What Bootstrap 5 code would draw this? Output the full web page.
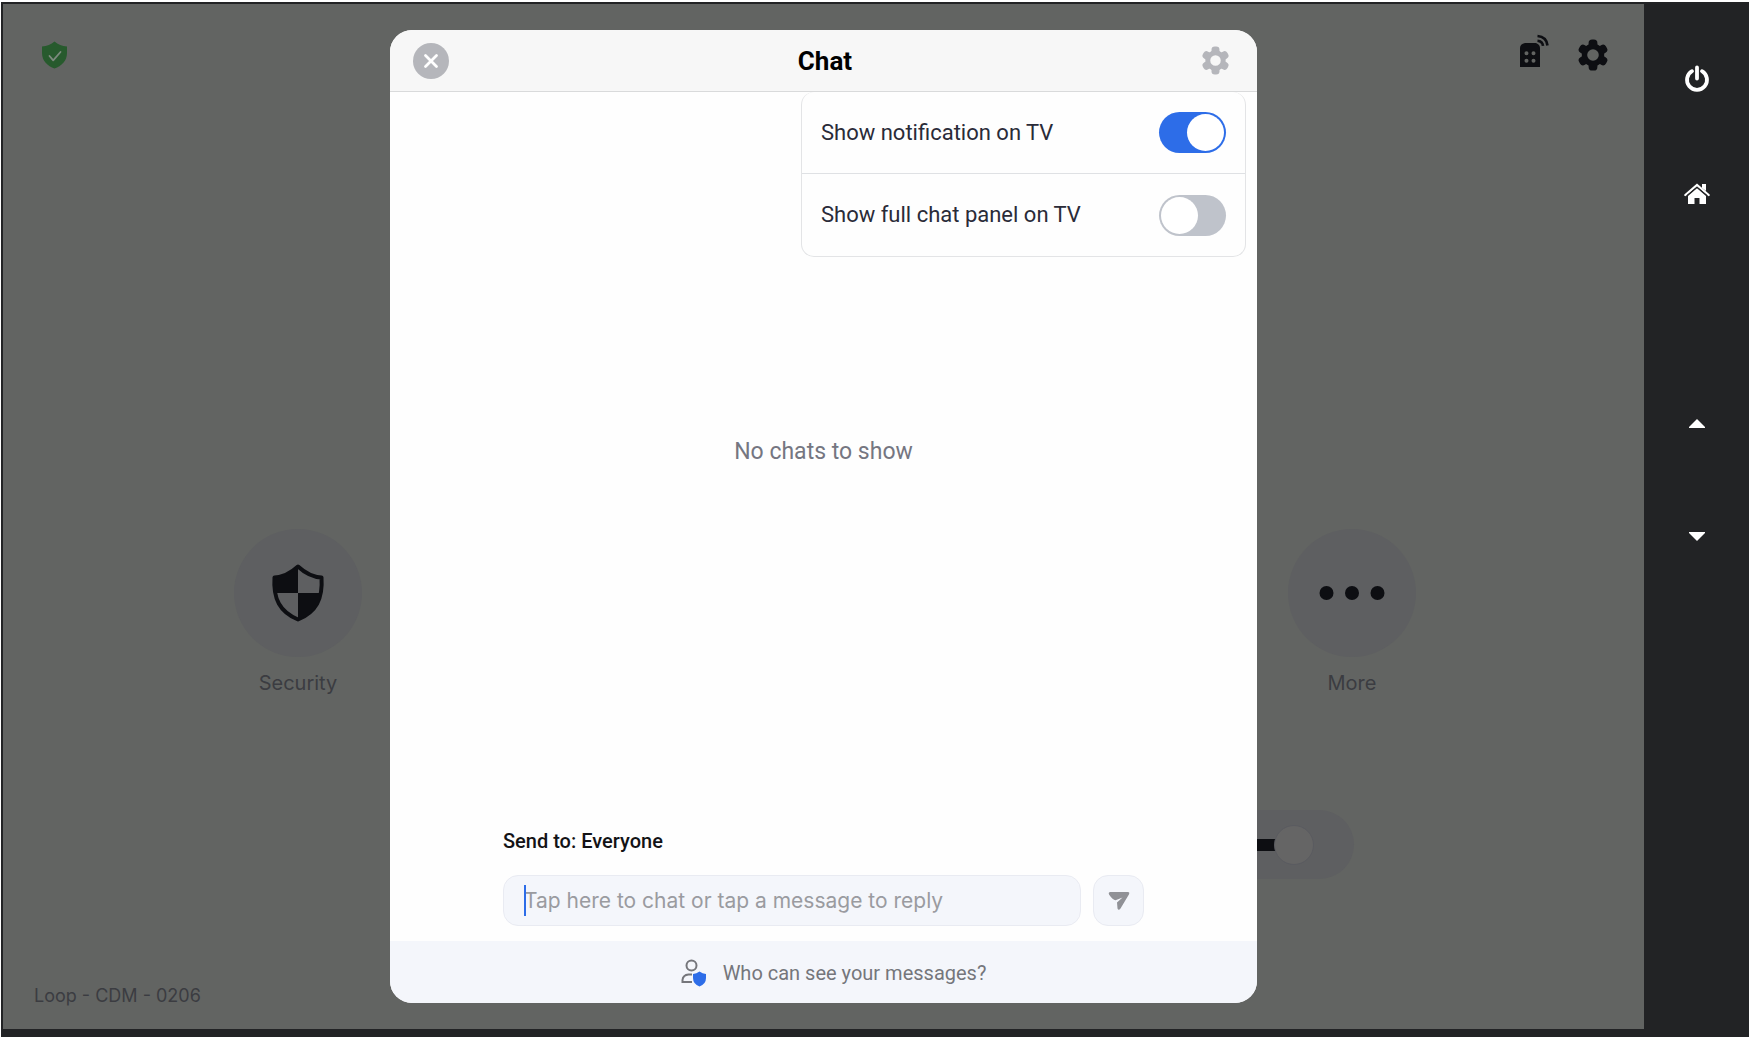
<!DOCTYPE html>
<html lang="en">
<head>
<meta charset="utf-8">
<meta name="viewport" content="width=device-width, initial-scale=1">
<title>Chat</title>
<link rel="stylesheet" href="https://cdn.jsdelivr.net/npm/bootstrap@5.3.0/dist/css/bootstrap.min.css">
<style>
  body { font-family: Roboto, "Liberation Sans", sans-serif; font-size: 20px; line-height: 28px; background: #fff; }
  .device { height: 100vh; padding: 2px 1px 7px; }
  .device-body { background: #222325; padding: 2px 0 8px 2px; }
  .room { background: #626462; font-family: Inter, sans-serif; color: #3b3c41; }
  .room-top { height: 102px; padding: 0 36px 0 38px; }
  .plain { border: 0; background: none; padding: 0; color: inherit; line-height: 0; }
  .dark-ink { color: #0d0e12; }
  .room-tiles { padding: 0 222px 0 225px; margin-top: 423px; font-size: 20px; }
  .tile { border: 0; background: none; padding: 0; color: inherit; width: 140px; }
  .tile-disc { width: 128px; height: 128px; background: #5e5f61; color: #0d0e12; }
  .tile-text { margin-top: 12px; }
  .volume { height: 69px; margin: 113px 290px 0 460px; background: #5e5f61; padding: 0 40px; }
  .volume input { appearance: none; width: 100%; height: 40px; background: none; margin: 0; }
  .volume input::-webkit-slider-runnable-track { height: 12px; background: linear-gradient(#0d0e12, #0d0e12) left / calc(100% - 20px) 100% no-repeat; }
  .volume input::-webkit-slider-thumb { appearance: none; width: 40px; height: 40px; margin-top: -14px; border-radius: 50%; background: #656565; border: 1px solid #5a5b60; }
  .room-name { font-size: 18px; padding: 0 31px 19px; }
  .rail { width: 105px; color: #fff; padding-top: 61px; }
  .rail .plain { width: 40px; height: 26px; display: flex; align-items: center; justify-content: center; }
  .rail .rail-home { margin-top: 90px; }
  .rail .rail-up { margin-top: 203px; }
  .rail .rail-down { margin-top: 87px; }
  .chat-layer { position: absolute; inset: 0; padding: 26px 0; font-family: Roboto, "Liberation Sans", sans-serif; }
  .chat-box { width: 53%; max-width: 867px; background: #fefefe; border-radius: 22px; overflow: hidden; }
  .chat-head { height: 62px; background: #f7f7f7; border-bottom: 1px solid #d9dadb; padding: 0 27px 0 23px; color: #b5b6bb; }
  .chat-title { font-size: 26px; line-height: 32px; font-weight: 700; color: #000; margin: 0; }
  .chat-main { position: relative; }
  .options { position: absolute; top: 0; right: 11px; width: 445px; border: 1px solid #e3e4e6; border-top: 0; border-radius: 13px; background: #fefefe; color: #2a2b38; font-size: 22px; }
  .option { height: 81px; padding: 0 19px; }
  .option + .option { border-top: 1px solid #dfe1e4; height: 83px; }
  .option .form-check-input { width: 67px; height: 41px; margin: 0; border: 0; border-radius: 21px; background: #bfc3cb; position: relative; box-shadow: none; }
  .option .form-check-input::after { content: ""; position: absolute; left: 2px; top: 2px; width: 37px; height: 37px; border-radius: 50%; background: #fff; }
  .option .form-check-input:checked { background: #2d6de8; }
  .option .form-check-input:checked::after { left: 28px; }
  .empty-note { font-size: 23px; color: #757681; padding-top: 346px; }
  .composer { padding: 0 113px 15px; }
  .send-to { color: #131316; margin-bottom: 20px; font-weight: 500; }
  .field, .send { height: 51px; background: #f4f6fb; border: 1px solid #e9ebf2; border-radius: 15px; }
  .field-wrap { position: relative; }
  .field { padding: 0 20px; font-size: 21px; font-family: Inter, sans-serif; }
  .field::placeholder { color: #9a9ba0; }
  .field:focus { background: #f4f6fb; box-shadow: none; border-color: #e9ebf2; }
  .caret { position: absolute; left: 21px; top: 10px; width: 2px; height: 31px; background: #2d6de8; }
  .send { width: 51px; color: #909196; }
  .privacy { height: 62px; background: #f4f6fb; color: #75767b; padding: 2px 0 0 20px; }
  .privacy a { color: inherit; }
</style>
<script src="https://cdn.jsdelivr.net/npm/bootstrap@5.3.0/dist/js/bootstrap.bundle.min.js"></script>
</head>
<body>
<svg class="d-none" aria-hidden="true">
  <symbol id="gear" viewBox="0 0 30 32">
    <circle cx="15" cy="16" r="8.500" fill="none" stroke="currentColor" stroke-width="5.400"/>
    <g fill="currentColor">
      <rect id="tooth" x="10.600" y=".5" width="8.800" height="9" rx="3.600"/>
      <use href="#tooth" transform="rotate(60 15 16)"/>
      <use href="#tooth" transform="rotate(120 15 16)"/>
      <use href="#tooth" transform="rotate(180 15 16)"/>
      <use href="#tooth" transform="rotate(240 15 16)"/>
      <use href="#tooth" transform="rotate(300 15 16)"/>
    </g>
  </symbol>
</svg>
<div class="device">
  <div class="device-body d-flex h-100">
    <div class="room flex-grow-1 position-relative d-flex flex-column">
      <div class="room-top d-flex align-items-center justify-content-between">
        <svg width="27" height="28" viewBox="0 0 27 28" role="img" aria-label="Secured"><path fill="#275a2d" d="M13.500.500C17 3.500 21 5.300 26 5.500V12c0 8-5.500 13-12.500 15.500C6.500 25 1 20 1 12V5.500C6 5.300 10 3.500 13.500.500z"/><path d="M8.500 15l3.700 4.300L19.500 11" fill="none" stroke="#7d8a7e" stroke-width="1.800" stroke-linecap="round" stroke-linejoin="round"/></svg>
        <div class="d-flex align-items-center dark-ink gap-4">
          <button class="plain me-1 pb-2" aria-label="Controller"><svg width="30" height="34" viewBox="0 0 30 34"><path fill="currentColor" fill-rule="evenodd" d="M5 9h11q4 1.500 4 5v19H0V14q0-4 5-5zM6.500 17.300a2 2 0 1 0 0 4 2 2 0 0 0 0-4zm7 0a2 2 0 1 0 0 4 2 2 0 0 0 0-4zm-7 7.500a2 2 0 1 0 0 4 2 2 0 0 0 0-4zm7 0a2 2 0 1 0 0 4 2 2 0 0 0 0-4z"/><path d="M17.500 6.800q5 .5 5.500 5M17.500 2q9 .7 10 9.500" fill="none" stroke="currentColor" stroke-width="2.600"/></svg></button>
          <button class="plain" aria-label="Settings"><svg width="30" height="32"><use href="#gear"/></svg></button>
        </div>
      </div>
      <div class="room-tiles d-flex justify-content-between">
        <button class="tile d-flex flex-column align-items-center">
          <span class="tile-disc rounded-circle d-flex align-items-center justify-content-center"><svg width="54" height="60" viewBox="0 0 54 60"><path d="M27 3.500C20 10 12 14 3.500 14.500 2 36 9 49 27 56.500 45 49 52 36 50.500 14.500 42 14 34 10 27 3.500z" fill="none" stroke="currentColor" stroke-width="4" stroke-linejoin="round"/><path fill="currentColor" d="M27 3.500V30H3.500V14.500C12 14 20 10 27 3.500zM27 30h23C49 43 42 50 27 56.500z"/></svg></span>
          <span class="tile-text">Security</span>
        </button>
        <button class="tile d-flex flex-column align-items-center">
          <span class="tile-disc rounded-circle d-flex align-items-center justify-content-center"><svg width="66" height="16" viewBox="0 0 66 16" fill="currentColor"><circle cx="7.500" cy="8" r="7"/><circle cx="33" cy="8" r="7"/><circle cx="58.500" cy="8" r="7"/></svg></span>
          <span class="tile-text">More</span>
        </button>
      </div>
      <div class="volume rounded-pill d-flex align-items-center"><input type="range" value="100" aria-label="Volume"></div>
      <div class="room-name mt-auto">Loop - CDM - 0206</div>

      <div class="chat-layer d-flex justify-content-center">
        <section class="chat-box d-flex flex-column" role="dialog" aria-labelledby="chatTitle">
          <header class="chat-head d-flex align-items-center justify-content-between">
            <button class="plain" aria-label="Close"><svg width="36" height="36" viewBox="0 0 36 36"><circle cx="18" cy="18" r="18" fill="currentColor"/><path d="M12.500 12.500l11 11m0-11l-11 11" stroke="#fff" stroke-width="2.800" stroke-linecap="round"/></svg></button>
            <h1 class="chat-title" id="chatTitle">Chat</h1>
            <button class="plain" aria-label="Chat settings"><svg width="29" height="29"><use href="#gear"/></svg></button>
          </header>
          <div class="chat-main flex-grow-1 text-center">
            <div class="options">
              <div class="option form-switch d-flex align-items-center justify-content-between">
                <label for="optNotify">Show notification on TV</label>
                <input class="form-check-input" type="checkbox" role="switch" id="optNotify" checked>
              </div>
              <div class="option form-switch d-flex align-items-center justify-content-between">
                <label for="optPanel">Show full chat panel on TV</label>
                <input class="form-check-input" type="checkbox" role="switch" id="optPanel">
              </div>
            </div>
            <p class="empty-note mb-0">No chats to show</p>
          </div>
          <form class="composer">
            <label class="send-to d-block" for="message">Send to: Everyone</label>
            <div class="d-flex gap-2">
              <div class="field-wrap flex-grow-1 me-1"><input class="field form-control" id="message" type="text" placeholder="Tap here to chat or tap a message to reply"><span class="caret"></span></div>
              <button class="send d-flex align-items-center justify-content-center p-0" type="button" aria-label="Send"><svg width="22" height="20" viewBox="0 0 22 20"><path fill="currentColor" d="M1.800 1h18.200q1.800.200 1.200 2L12.500 17.500Q10.500 20 9.500 17.500L9 11.500 14.500 6.500 7.500 9.200Q5 9.300 1 3.500 0 1.500 1.800 1z"/></svg></button>
            </div>
          </form>
          <footer class="privacy d-flex align-items-center justify-content-center">
            <a href="#" class="d-flex align-items-center text-decoration-none gap-3"><svg width="26" height="28" viewBox="0 0 26 28"><g fill="none" stroke="currentColor" stroke-width="2"><circle cx="10.500" cy="6.500" r="5"/><path d="M11 15.500H7.500Q2 16 1.500 21v2H11"/></g><path fill="#2d6de8" d="M18.500 12.500q3 2 6.500 2.500v4q0 6-6.500 8.500Q12 25 12 19v-4q3.500-.5 6.500-2.500z"/></svg><span>Who can see your messages?</span></a>
          </footer>
        </section>
      </div>
    </div>
    <nav class="rail d-flex flex-column align-items-center flex-shrink-0" aria-label="Device">
      <button class="plain" aria-label="Power"><svg width="26" height="27" viewBox="0 0 26 27" fill="none" stroke="#fff" stroke-width="3.800" stroke-linecap="round"><path d="M8 6.200a10 10 0 1 0 10 0M13 2.500v11"/></svg></button>
      <button class="plain rail-home" aria-label="Home"><svg width="26" height="22" viewBox="0 0 26 22" fill="#fff"><path d="M4 13l9-7.800L22 13v8h-6.500v-6h-5v6H4z"/><path d="M1.300 12L13 2l11.700 10" fill="none" stroke="#fff" stroke-width="2.200" stroke-linecap="round"/><path d="M18 1h4v7l-4-3z"/><path d="M3 12.500L13 4.200l10 8.300" fill="none" stroke="#222325" stroke-width="1"/></svg></button>
      <button class="plain rail-up" aria-label="Volume up"><svg width="16" height="9" viewBox="0 0 16 9"><path fill="#fff" d="M8 0l8 8v1H0V8z"/></svg></button>
      <button class="plain rail-down" aria-label="Volume down"><svg width="16" height="9" viewBox="0 0 16 9"><path fill="#fff" d="M0 0h16v1L8 9 0 1z"/></svg></button>
    </nav>
  </div>
</div>
</body>
</html>
